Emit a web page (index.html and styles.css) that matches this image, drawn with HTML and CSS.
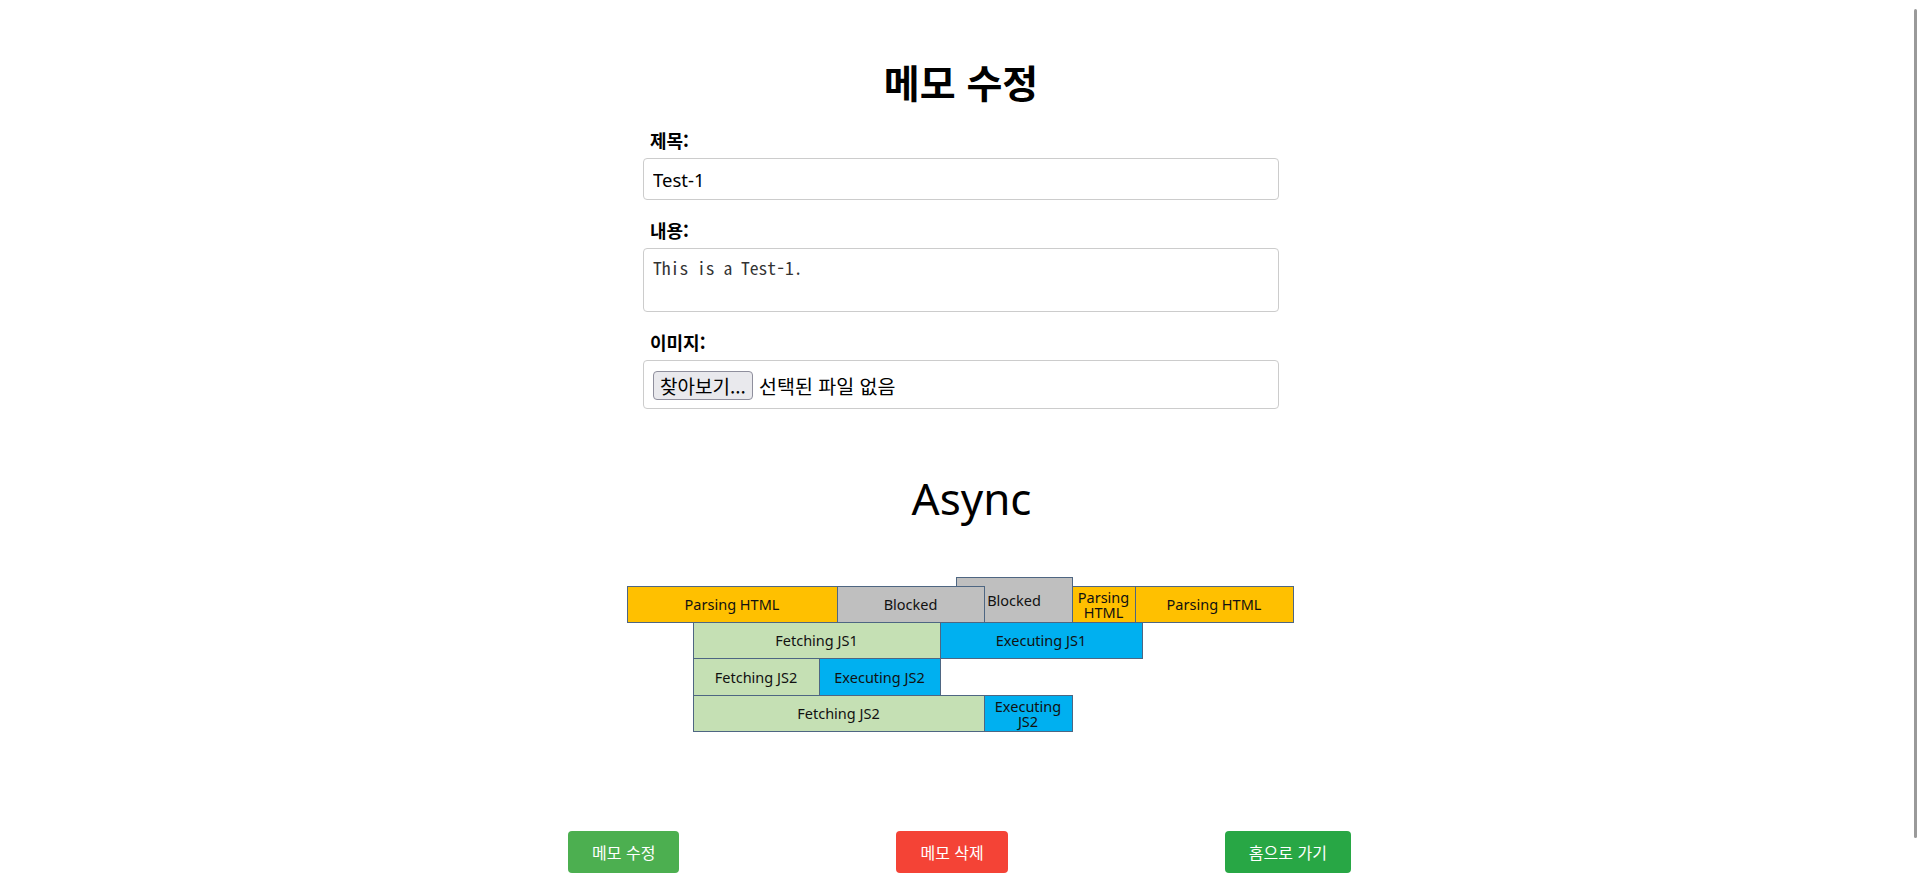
FILE: index.html
```html
<!DOCTYPE html>
<html lang="ko">
<head>
<meta charset="utf-8">
<title>메모 수정</title>
<link rel="stylesheet" href="styles.css">
</head>
<body>
<main class="page">
  <form class="memo-form">
    <h1 class="title">메모 수정</h1>
    <div class="field">
      <label class="label" for="title">제목:</label>
      <input class="input" id="title" type="text" value="Test-1">
    </div>
    <div class="field">
      <label class="label" for="content">내용:</label>
      <textarea class="textarea" id="content">This is a Test-1.</textarea>
    </div>
    <div class="field">
      <label class="label">이미지:</label>
      <div class="file-box">
        <span class="file-btn">찾아보기...</span>
        <span class="file-text">선택된 파일 없음</span>
      </div>
    </div>
  </form>

  <section class="diagram-wrap">
    <h2 class="async">Async</h2>
    <div class="diagram">
      <div class="box gray b-blk2"><span class="blk2-text">Blocked</span></div>
      <div class="box orange b-p1">Parsing HTML</div>
      <div class="box gray b-blk1">Blocked</div>
      <div class="box orange b-p2">Parsing<br>HTML</div>
      <div class="box orange b-p3">Parsing HTML</div>
      <div class="box green b-f1">Fetching JS1</div>
      <div class="box blue b-e1">Executing JS1</div>
      <div class="box green b-f2">Fetching JS2</div>
      <div class="box blue b-e2">Executing JS2</div>
      <div class="box green b-f3">Fetching JS2</div>
      <div class="box blue b-e3">Executing<br>JS2</div>
    </div>
  </section>

  <div class="actions">
    <button class="btn btn-edit" type="button">메모 수정</button>
    <button class="btn btn-delete" type="button">메모 삭제</button>
    <button class="btn btn-home" type="button">홈으로 가기</button>
  </div>
</main>
<div class="scroll-thumb"></div>
</body>
</html>
```

FILE: styles.css
```css
html, body {
  margin: 0;
  padding: 0;
  background: #ffffff;
  overflow: hidden;
  height: 875px;
}

body {
  font-family: "Noto Sans", "Noto Sans CJK KR", sans-serif;
  color: #000;
}

.page {
  display: block;
}

.memo-form {
  width: 636px;
  margin: 0 auto;
  padding-left: 3px;
  display: flex;
  flex-direction: column;
}

.title {
  margin: 59px 0 25px;
  font-size: 39px;
  line-height: 44px;
  font-weight: 700;
  text-align: center;
  font-family: "Noto Sans CJK KR", sans-serif;
}

.field {
  display: flex;
  flex-direction: column;
}

.field + .field {
  margin-top: 18px;
}

.label {
  font-family: "Noto Sans CJK KR", sans-serif;
  font-size: 18px;
  font-weight: 700;
  line-height: 24px;
  padding-left: 7px;
  margin-bottom: 6px;
}

.input {
  box-sizing: border-box;
  height: 42px;
  width: 100%;
  margin: 0;
  border: 1px solid #cccccc;
  border-radius: 4px;
  padding: 0 9px;
  font-family: "Noto Sans", "Noto Sans CJK KR", sans-serif;
  font-size: 18.5px;
  color: #000;
  outline: none;
}

.textarea {
  box-sizing: border-box;
  height: 64px;
  width: 100%;
  margin: 0;
  border: 1px solid #cccccc;
  border-radius: 4px;
  padding: 8px 9px;
  font-family: "Noto Sans Mono CJK KR", "Liberation Mono", monospace;
  font-size: 17.6px;
  line-height: 22px;
  color: #333;
  resize: none;
  outline: none;
  overflow: hidden;
}

.file-box {
  box-sizing: border-box;
  height: 49px;
  border: 1px solid #cccccc;
  border-radius: 4px;
  padding: 10px 9px 8px;
  display: flex;
  align-items: center;
  gap: 6px;
  font-family: "Noto Sans CJK KR", sans-serif;
  font-size: 19.5px;
}

.file-btn {
  box-sizing: border-box;
  width: 100px;
  height: 29px;
  border: 1px solid #8f8f9d;
  border-radius: 4px;
  background: #e9e9ed;
  display: flex;
  align-items: center;
  justify-content: center;
  line-height: 1;
  white-space: nowrap;
  font-size: 19px;
}

.file-text {
  line-height: 1;
}

.diagram-wrap {
  display: flex;
  flex-direction: column;
  align-items: center;
}

.async {
  margin: 59px 0 0;
  font-size: 44px;
  line-height: 60px;
  font-weight: 400;
  padding-left: 24px;
  font-family: "Noto Sans", sans-serif;
}

.diagram {
  position: relative;
  width: 667px;
  height: 155px;
  margin-top: 49px;
  margin-left: 1px;
  font-family: "Noto Sans", sans-serif;
  font-size: 14.5px;
  color: #111;
}

.box {
  position: absolute;
  box-sizing: border-box;
  border: 1px solid #4e6682;
  display: flex;
  align-items: center;
  justify-content: center;
  text-align: center;
  line-height: 15px;
}

.orange { background: #ffc000; }
.gray { background: #bfbfbf; }
.green { background: #c5e0b4; }
.blue { background: #00b0f0; }

.b-p1 { left: 0; top: 9px; width: 211px; height: 37px; }
.b-blk1 { left: 210px; top: 9px; width: 148px; height: 37px; z-index: 2; }
.b-blk2 { left: 329px; top: 0; width: 117px; height: 46px; z-index: 1; }
.b-p2 { left: 445px; top: 9px; width: 64px; height: 37px; }
.b-p3 { left: 508px; top: 9px; width: 159px; height: 37px; }
.b-f1 { left: 66px; top: 45px; width: 248px; height: 37px; }
.b-e1 { left: 313px; top: 45px; width: 203px; height: 37px; }
.b-f2 { left: 66px; top: 81px; width: 127px; height: 38px; }
.b-e2 { left: 192px; top: 81px; width: 122px; height: 38px; }
.b-f3 { left: 66px; top: 118px; width: 292px; height: 37px; }
.b-e3 { left: 357px; top: 118px; width: 89px; height: 37px; }

.actions {
  width: 1000px;
  margin: 99px auto 0;
  display: flex;
  justify-content: space-around;
}

.btn {
  box-sizing: border-box;
  height: 42px;
  padding: 0 24px;
  border: none;
  border-radius: 4px;
  color: #ffffff;
  font-family: "Noto Sans CJK KR", sans-serif;
  font-size: 16px;
  line-height: 1;
  cursor: pointer;
}

.btn-edit { background: #4caf50; }
.btn-delete { background: #f44336; }
.btn-home { background: #28a745; }

.scroll-thumb {
  position: fixed;
  right: 2px;
  top: 9px;
  width: 3px;
  height: 829px;
  background: #9a9a9a;
  border-radius: 2px;
}
```
